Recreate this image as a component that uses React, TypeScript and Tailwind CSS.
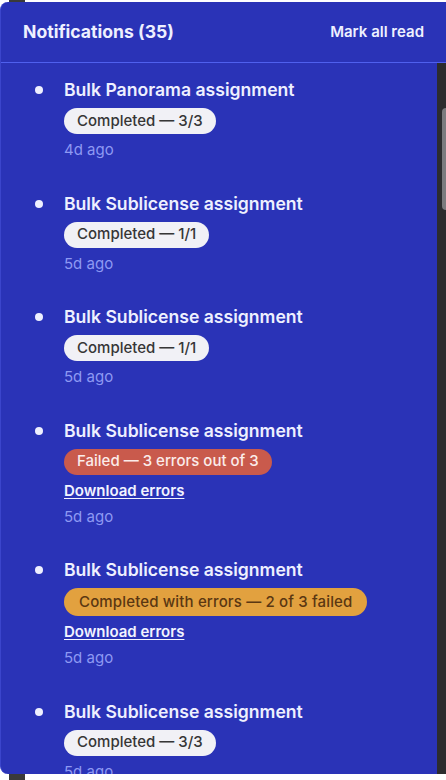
import React from "react";

type Tone = "done" | "failed" | "partial";

type Note = {
  title: string;
  status: string;
  tone: Tone;
  when: string;
  errors?: boolean;
};

const notes: Note[] = [
  { title: "Bulk Panorama assignment", status: "Completed — 3/3", tone: "done", when: "4d ago" },
  { title: "Bulk Sublicense assignment", status: "Completed — 1/1", tone: "done", when: "5d ago" },
  { title: "Bulk Sublicense assignment", status: "Completed — 1/1", tone: "done", when: "5d ago" },
  { title: "Bulk Sublicense assignment", status: "Failed — 3 errors out of 3", tone: "failed", when: "5d ago", errors: true },
  { title: "Bulk Sublicense assignment", status: "Completed with errors — 2 of 3 failed", tone: "partial", when: "5d ago", errors: true },
  { title: "Bulk Sublicense assignment", status: "Completed — 3/3", tone: "done", when: "5d ago" },
];

const badgeTone: Record<Tone, string> = {
  done: "h-[26px] px-[13px] bg-[#f1f1f6] text-[#363636]",
  failed: "h-[26px] px-[13px] bg-[#c95a4c] text-[#fbecea]",
  partial: "h-[28px] px-[15px] bg-[#e2a13f] text-[#5a3712] tracking-[0.01em]",
};

function Item({ n }: { n: Note }) {
  return (
    <li className="flex pl-[34px]">
      <span className="mt-[8px] h-2 w-2 shrink-0 rounded-full bg-[#eef0ff]" />
      <div className="ml-[21px] flex flex-col items-start gap-1.5">
        <div className="text-[17.6px] font-semibold leading-6 text-[#eef0ff]">{n.title}</div>
        <span className={`inline-flex items-center rounded-full text-[15px] font-medium ${badgeTone[n.tone]}`}>
          {n.status}
        </span>
        {n.errors && (
          <a href="#" className="text-[15px] font-semibold leading-5 text-[#f2f3ff] underline underline-offset-2">
            Download errors
          </a>
        )}
        <div className="text-[15px] leading-5 text-[#8e99f3]">{n.when}</div>
      </div>
    </li>
  );
}

export default function App() {
  return (
    <div className="relative h-[780px] w-[446px] overflow-hidden bg-white" style={{ fontFamily: "Inter, 'Noto Sans', sans-serif" }}>
      {/* page sidebar peeking out behind the popover */}
      <div className="absolute bottom-0 left-[9px] top-0 w-[16px] bg-[#3a3a3a]" />

      {/* notifications popover */}
      <div className="absolute bottom-[6px] left-0 right-0 top-[2px] flex flex-col overflow-hidden rounded-l-lg border-l border-[#3b45cc] bg-[#2a33b7]">
        <header className="flex h-[61px] shrink-0 items-center justify-between border-b border-[#4f60ee] pl-[22px] pr-[22px]">
          <h2 className="text-[17.6px] font-bold text-[#eef0ff]">Notifications (35)</h2>
          <button className="text-[15px] font-semibold text-[#eef0ff]">Mark all read</button>
        </header>

        <div className="flex min-h-0 flex-1">
          <ul className="flex flex-1 flex-col gap-[31.5px] overflow-hidden pt-[15px]">
            {notes.map((n, i) => (
              <Item key={i} n={n} />
            ))}
          </ul>
          {/* scrollbar */}
          <div className="w-[9px] shrink-0 bg-[#2c2c2e] pt-[45px]">
            <div className="ml-[5px] h-[102px] rounded-l bg-[#7b7b7e]" />
          </div>
        </div>
      </div>
    </div>
  );
}
